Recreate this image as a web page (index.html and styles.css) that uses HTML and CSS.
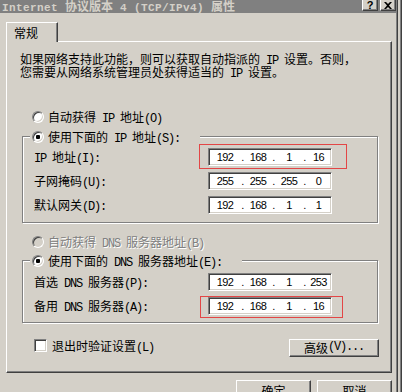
FILE: index.html
```html
<!DOCTYPE html>
<html lang="zh-CN">
<head>
<meta charset="utf-8">
<title>Internet 协议版本 4 (TCP/IPv4) 属性</title>
<link rel="stylesheet" href="styles.css">
</head>
<body>
<div class="win">
  <div class="titlebar">
    <div class="title"><span class="tl">Internet </span>协议版本<span class="tl"> 4 (TCP/IPv4) </span>属性</div>
    <div class="tbtns">
      <span class="tbtn">?</span>
      <span class="tbtn"><svg width="8" height="7" viewBox="0 0 8 7"><path d="M0 0h2l2 2 2-2h2L5 3.5 8 7H6L4 5 2 7H0l3-3.5z" fill="#000"/></svg></span>
    </div>
  </div>
  <div class="body">
    <div class="tab">常规</div>
    <div class="panel">
      <div class="desc">
        <div class="line">如果网络支持此功能，则可以获取自动指派的<span class="l"> IP </span>设置。否则，</div>
        <div class="line">您需要从网络系统管理员处获得适当的<span class="l"> IP </span>设置。</div>
      </div>

      <div class="opt opt-first"><span class="radio"></span><span>自动获得<span class="l"> IP </span>地址<span class="l">(O)</span></span></div>

      <div class="group group-ip">
        <div class="legend legend-ip"><span class="radio on"></span><span>使用下面的<span class="l"> IP </span>地址<span class="l">(S):</span></span></div>
        <div class="rows rows-ip">
          <div class="row">
            <span class="lbl"><span class="l">IP </span>地址<span class="l">(I):</span></span>
            <div class="ip"><span class="seg s1">192</span><span class="dot">.</span><span class="seg s2">168</span><span class="dot">.</span><span class="seg s3">1</span><span class="dot">.</span><span class="seg s4">16</span><span class="mark mark-a"></span></div>
          </div>
          <div class="row">
            <span class="lbl">子网掩码<span class="l">(U):</span></span>
            <div class="ip"><span class="seg s1">255</span><span class="dot">.</span><span class="seg s2">255</span><span class="dot">.</span><span class="seg s3">255</span><span class="dot">.</span><span class="seg s4">0</span></div>
          </div>
          <div class="row">
            <span class="lbl">默认网关<span class="l">(D):</span></span>
            <div class="ip"><span class="seg s1">192</span><span class="dot">.</span><span class="seg s2">168</span><span class="dot">.</span><span class="seg s3">1</span><span class="dot">.</span><span class="seg s4">1</span></div>
          </div>
        </div>
      </div>

      <div class="opt opt-dns disabled"><span class="radio off"></span><span>自动获得<span class="l"> DNS </span>服务器地址<span class="l">(B)</span></span></div>

      <div class="group group-dns">
        <div class="legend legend-dns"><span class="radio on"></span><span>使用下面的<span class="l"> DNS </span>服务器地址<span class="l">(E):</span></span></div>
        <div class="rows rows-dns">
          <div class="row">
            <span class="lbl">首选<span class="l"> DNS </span>服务器<span class="l">(P):</span></span>
            <div class="ip"><span class="seg s1">192</span><span class="dot">.</span><span class="seg s2">168</span><span class="dot">.</span><span class="seg s3">1</span><span class="dot">.</span><span class="seg s4">253</span></div>
          </div>
          <div class="row">
            <span class="lbl">备用<span class="l"> DNS </span>服务器<span class="l">(A):</span></span>
            <div class="ip"><span class="seg s1">192</span><span class="dot">.</span><span class="seg s2">168</span><span class="dot">.</span><span class="seg s3">1</span><span class="dot">.</span><span class="seg s4">16</span><span class="mark mark-b"></span></div>
          </div>
        </div>
      </div>

      <div class="checkrow">
        <span class="check"></span>
        <span class="checklbl">退出时验证设置<span class="l">(L)</span></span>
        <span class="btn btn-adv">高级<span class="l">(V)...</span></span>
      </div>
    </div>
    <div class="okrow">
      <span class="btn btn-ok">确定</span>
      <span class="btn btn-ok">取消</span>
    </div>
  </div>
</div>
</body>
</html>
```

FILE: styles.css
```css
html, body {
  margin: 0;
  padding: 0;
  width: 402px;
  height: 392px;
  overflow: hidden;
  background: #d4d0c8;
}

body {
  font-family: "Noto Sans CJK SC", "Noto Sans", sans-serif;
  font-size: 12px;
  color: #000;
}

.win {
  width: 396px;
  height: 392px;
  background: #d4d0c8;
  box-shadow: 1px 0 0 #808080, 2px 0 0 #404040, 4px 0 0 #d4d0c8, 5px 0 0 #808080, 6px 0 0 #404040;
}

.l {
  font-family: "Liberation Mono", monospace;
  font-size: 12px;
  letter-spacing: -1.2px;
  line-height: 12px;
  white-space: pre;
}

/* title bar */
.titlebar {
  height: 13px;
  background: #808080;
  display: flex;
  align-items: flex-start;
  justify-content: space-between;
}

.title {
  color: #d4d0c8;
  font-weight: bold;
  line-height: 13px;
  margin-top: -1px;
  padding-left: 2px;
  white-space: nowrap;
}

.tl {
  font-family: "Liberation Mono", monospace;
  font-size: 11px;
  font-weight: bold;
  letter-spacing: 0.4px;
  white-space: pre;
}

.tbtns {
  display: flex;
  gap: 2px;
  margin-top: -3px;
}

.tbtn {
  width: 16px;
  height: 14px;
  box-sizing: border-box;
  background: #d4d0c8;
  border: 1px solid;
  border-color: #fff #404040 #404040 #fff;
  box-shadow: inset -1px -1px 0 #808080;
  display: flex;
  align-items: center;
  justify-content: center;
  font-family: "Liberation Sans", sans-serif;
  font-weight: bold;
  font-size: 11px;
  line-height: 11px;
  padding-top: 2px;
}

/* body */
.body {
  padding: 9px 0 0 6px;
}

.tab {
  position: relative;
  z-index: 1;
  width: 52px;
  height: 20px;
  margin-bottom: -1px;
  box-sizing: border-box;
  background: #d4d0c8;
  border-top: 1px solid #fff;
  border-left: 1px solid #fff;
  border-right: 1px solid #404040;
  box-shadow: inset -1px 0 0 #808080;
  padding: 3px 0 0 7px;
  line-height: 13px;
}

.panel {
  width: 386px;
  height: 332px;
  box-sizing: border-box;
  border-top: 1px solid #fff;
  border-left: 1px solid #fff;
  border-right: 1px solid #404040;
  border-bottom: 1px solid #404040;
  box-shadow: inset -1px -1px 0 #808080;
  display: flex;
  flex-direction: column;
  align-items: flex-start;
}

.desc {
  margin: 10px 0 0 13px;
  line-height: 13px;
}

.desc .line {
  height: 13px;
  white-space: nowrap;
}

.opt {
  display: flex;
  align-items: center;
  gap: 4px;
  height: 14px;
  line-height: 14px;
  margin-left: 25px;
  white-space: nowrap;
}

.opt-first { margin-top: 32px; }
.opt-dns { margin-top: 12px; }

.disabled {
  color: #808080;
  text-shadow: 1px 1px 0 #fff;
}

.radio {
  position: relative;
  flex: none;
  width: 12px;
  height: 12px;
  box-sizing: border-box;
  border-radius: 50%;
  background: #fff;
  border: 1px solid;
  border-color: #808080 #fff #fff #808080;
  box-shadow: inset 1px 1px 0 #404040, inset -1px -1px 0 #d4d0c8;
}

.radio.off {
  background: #d4d0c8;
}

.radio.on::after {
  content: "";
  position: absolute;
  left: 3px;
  top: 3px;
  width: 4px;
  height: 4px;
  border-radius: 1px;
  background: #000;
}

.group {
  margin-left: 15px;
  width: 356px;
  box-sizing: border-box;
  border: 1px solid #808080;
  box-shadow: inset 1px 1px 0 #fff, 1px 1px 0 #fff;
  display: flex;
  flex-direction: column;
}

.group-ip { margin-top: 12px; padding-bottom: 8px; }
.group-dns { margin-top: 11px; padding-bottom: 7px; }

.legend {
  display: flex;
  align-items: center;
  gap: 4px;
  height: 14px;
  line-height: 14px;
  margin: -7px 0 0 7px;
  padding-left: 2px;
  box-sizing: border-box;
  background: #d4d0c8;
  white-space: nowrap;
}

.legend-ip { width: 170px; }
.legend-dns { width: 212px; }

.rows {
  display: flex;
  flex-direction: column;
  gap: 6px;
}

.rows-ip { margin-top: 4px; }
.rows-dns { margin-top: 5px; }

.row {
  display: flex;
  align-items: center;
  height: 18px;
  padding-left: 11px;
}

.lbl {
  width: 174px;
  flex: none;
  white-space: nowrap;
  line-height: 14px;
}

.ip {
  position: relative;
  width: 124px;
  height: 18px;
  box-sizing: border-box;
  background: #fff;
  border: 1px solid;
  border-color: #808080 #fff #fff #808080;
  box-shadow: inset 1px 1px 0 #404040, inset -1px -1px 0 #d4d0c8;
  padding-left: 1px;
  display: flex;
  align-items: center;
  font-family: "Liberation Sans", sans-serif;
  font-size: 11px;
  letter-spacing: -0.6px;
  line-height: 14px;
}

.seg { text-align: center; }
.s1 { width: 30px; }
.s2 { width: 26px; }
.s3 { width: 26px; }
.s4 { width: 23px; }
.dot { width: 5px; text-align: center; }

.mark {
  position: absolute;
  box-sizing: border-box;
  border: 1px solid #e34646;
}

.mark-a { left: -10px; top: -5px; width: 148px; height: 25px; }
.mark-b { left: -9px; top: -2px; width: 143px; height: 22px; }

.checkrow {
  display: flex;
  align-items: flex-start;
  width: 100%;
  box-sizing: border-box;
  margin-top: 16px;
  padding: 0 12px 0 27px;
}

.check {
  flex: none;
  width: 13px;
  height: 13px;
  box-sizing: border-box;
  background: #fff;
  border: 1px solid;
  border-color: #808080 #fff #fff #808080;
  box-shadow: inset 1px 1px 0 #404040, inset -1px -1px 0 #d4d0c8;
}

.checklbl {
  margin-left: 5px;
  line-height: 13px;
  white-space: nowrap;
}

.btn {
  display: flex;
  justify-content: center;
  box-sizing: border-box;
  background: #d4d0c8;
  border: 1px solid;
  border-color: #fff #404040 #404040 #fff;
  box-shadow: inset -1px -1px 0 #808080;
  white-space: nowrap;
}

.btn-adv {
  margin-left: auto;
  width: 90px;
  height: 18px;
  line-height: 14px;
  padding-top: 1px;
}

.okrow {
  width: 386px;
  margin-top: 7px;
  display: flex;
  justify-content: flex-end;
  gap: 6px;
}

.btn-ok {
  width: 75px;
  height: 23px;
  line-height: 13px;
  padding-top: 3px;
}
```
